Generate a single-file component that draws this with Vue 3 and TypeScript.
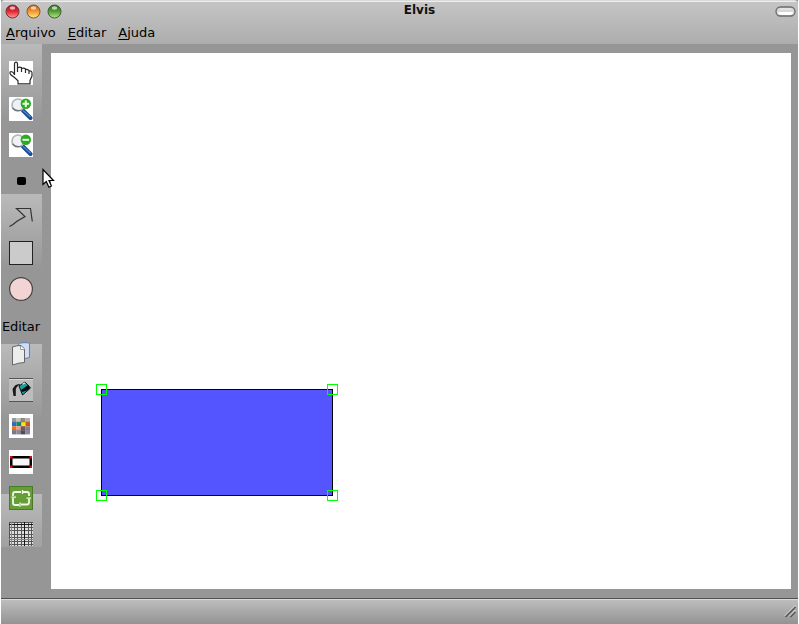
<script setup lang="ts">
interface MenuEntry {
  key: string
  rest: string
}

interface Light {
  name: string
  rim: string
  dark: string
  mid: string
  pale: string
}

const menus: MenuEntry[] = [
  { key: 'A', rest: 'rquivo' },
  { key: 'E', rest: 'ditar' },
  { key: 'A', rest: 'juda' },
]

const lights: Light[] = [
  { name: 'close', rim: '#74343a', dark: '#9c1820', mid: '#e8272f', pale: '#ffa0a0' },
  { name: 'minimize', rim: '#8c5228', dark: '#b85a18', mid: '#f3982f', pale: '#ffec85' },
  { name: 'maximize', rim: '#38602e', dark: '#2d6420', mid: '#55a036', pale: '#b8e68a' },
]

const swatches: string[][] = [
  ['#9b9a9a', '#c4c0bb', '#8f8c88', '#b1aeb0'],
  ['#1f70cf', '#128b5c', '#f6e80c', '#df4d16'],
  ['#e8781b', '#ee9d94', '#6e5a5a', '#8c7d83'],
  ['#77788c', '#8b8895', '#514b5e', '#89869e'],
]

const gridLines: number[] = [0.5, 5.5, 8.5, 12.5, 15.5, 19.5, 22.5]
</script>

<template>
  <div class="window">
    <header class="chrome">
      <div class="titlebar">
        <div class="lights">
          <svg v-for="l in lights" :key="l.name" width="15" height="15" viewBox="0 0 15 15">
            <defs>
              <linearGradient :id="l.name" x1="0" y1="0" x2="0" y2="1">
                <stop offset="0" :stop-color="l.dark" />
                <stop offset=".5" :stop-color="l.mid" />
                <stop offset="1" :stop-color="l.pale" />
              </linearGradient>
            </defs>
            <circle cx="7.500" cy="7.500" r="6.500" :fill="`url(#${l.name})`" :stroke="l.rim" />
            <ellipse class="shine" cx="7.500" cy="4" rx="2.800" ry="1.800" />
          </svg>
        </div>
        <div class="title">Elvis</div>
        <svg class="pill" width="21" height="11" viewBox="0 0 21 11">
          <rect x="1" y="1" width="19" height="9" rx="4.5" fill="#d7d7d7" stroke="#6c6c6c" stroke-width="1.3" />
          <path d="M3 6h15q-.5 3-3 3H6q-2.500 0-3-3" fill="#fff" />
          <path d="M5 3h11" stroke="#eee" />
        </svg>
      </div>
      <nav class="menubar">
        <span v-for="m in menus" :key="m.rest" class="menu"><span class="mnemonic">{{ m.key }}</span>{{ m.rest }}</span>
      </nav>
    </header>

    <main class="workspace">
      <aside class="toolbar">
        <div class="tools">
          <svg class="icon" viewBox="0 0 24 24">
            <rect width="24" height="24" fill="#fff" />
            <path d="M5.500 14V3Q5.500 1.200 7 1.200T8.500 3v8M8.500 6.800q2.500-1.300 4 0V11M12.500 7.500q2.500-1 4 .5V12M16.500 8.600q2-.5 3.500 1V13M20 10q3-.5 3 2v3l-2 4.500v3.300H9v-3L5.500 16.500 1.500 13.500Q.2 11 2 10.500q2 0 3.500 3" fill="none" stroke="#292929" stroke-width="1.200" />
          </svg>
          <svg v-for="sign in ['plus', 'minus']" :key="sign" class="icon" viewBox="0 0 24 24">
            <rect width="24" height="24" fill="#fff" />
            <path d="M14 13.500 21.500 21" stroke="#174b98" stroke-width="4" stroke-linecap="round" />
            <path d="M14 13.500 21.500 20" stroke="#4c8bcc" stroke-width="1.200" />
            <circle cx="9" cy="8" r="6" fill="#eef2f4" stroke="#b0b7bb" stroke-width="1.700" />
            <path d="M3.500 11Q7 15 12.500 13" fill="none" stroke="#6d767b" stroke-width="1.300" />
            <circle cx="16.800" cy="6.800" r="5.200" fill="#2bab22" />
            <path d="M13.500 6.800h6.600" stroke="#e8ffdc" stroke-width="2" />
            <path v-if="sign === 'plus'" d="M16.800 3.500v6.600" stroke="#e8ffdc" stroke-width="2" />
          </svg>
          <svg class="icon" viewBox="0 0 24 24">
            <rect x="8" y="8" width="9" height="8" rx="2" fill="#000" />
          </svg>
          <svg class="icon" viewBox="0 0 24 24">
            <path d="M.5 21.500 4 19.500 8 16.200 16 11.600 7.500 3.500H21.500L23.300 16.500" fill="none" stroke="#333" stroke-width="1.200" />
          </svg>
          <svg class="icon" viewBox="0 0 24 24">
            <rect x=".5" y=".5" width="23" height="23" fill="#cbcbcb" stroke="#222" />
          </svg>
          <svg class="icon" viewBox="0 0 24 24">
            <circle cx="12" cy="12" r="11.400" fill="#f2d4d4" stroke="#474343" stroke-width="1.200" />
          </svg>
        </div>
        <div class="section-label">Editar</div>
        <div class="tools">
          <svg class="icon" viewBox="0 0 24 24">
            <path d="M9.500 2.500 11.500 1Q16 .3 20.500 1v14.500L16 16.500H9.500z" fill="#cedff5" stroke="#6482ab" />
            <path d="M3.500 5Q8 3.300 12 3.500l3.500 3.300V20.500q-5 0-12 2.500z" fill="#ededeb" stroke="#666" />
            <path d="M11.500 4v3.500h4" fill="#fff" stroke="#999" />
          </svg>
          <svg class="icon" viewBox="0 0 24 24">
            <rect width="24" height="24" fill="#bdbdbd" />
            <path d="M0 .5h24M0 23.500h24" stroke="#555" />
            <path d="M0 1.500h24" stroke="#d8d8d8" />
            <path d="M3.500 11 6 7.500Q8.500 5.500 11.500 6L8 8.800 6.800 11V18H4.500z" fill="#191919" />
            <path d="m10 8 6-4 5.500 6-8 7z" fill="#18a0a4" stroke="#111" />
            <path d="m12 12 7.500-5.200 1.500 3.300-3 2.500-5 1.300z" fill="#070707" />
            <path d="m13.500 6.300 2.800-1.600" stroke="#e0e8e6" stroke-width="1.300" />
          </svg>
          <svg class="icon" viewBox="0 0 24 24">
            <rect width="24" height="24" fill="#fff" />
            <g v-for="(row, y) in swatches" :key="y">
              <rect v-for="(c, x) in row" :key="x" :x="3 + x * 4.5" :y="4 + y * 4.1" width="4.5" height="4.1" :fill="c" />
            </g>
            <path d="M3 8h18M3 16.200h18M12 4v16" stroke="#55515a" stroke-opacity=".5" stroke-width=".7" />
          </svg>
          <svg class="icon" viewBox="0 0 24 24">
            <rect width="24" height="24" fill="#fff" />
            <rect x="2.250" y="7.250" width="19.500" height="9.500" fill="#f7f7f7" stroke="#000" stroke-width="2.500" />
            <path d="M1 6h2.500v2.500H1zM20.500 6H23v2.500h-2.500zM1 15.500h2.500V18H1zM20.500 15.500H23V18h-2.500z" fill="#d60b12" />
          </svg>
          <svg class="icon" viewBox="0 0 24 24">
            <rect x=".5" y=".5" width="23" height="23" fill="#659d37" stroke="#477c24" />
            <path d="M12 6H6Q4 6 4 8v2M4 12v5q0 2 2 2h4M12 18.500h6q2 0 2-2V13M20 10V8q0-2-2-2h-4" fill="none" stroke="#f1f7e9" stroke-width="1.800" />
            <path d="M13.500 4v4M2.500 11.200H7M11 16.500v4.300M17.500 12.200H22" stroke="#f1f7e9" stroke-width="1.300" />
          </svg>
          <svg class="icon" viewBox="0 0 24 24">
            <rect width="24" height="24" fill="#dedede" />
            <path v-for="n in gridLines" :key="n" :d="`M0 ${n}h24M${n} 0v24`" stroke="#555" stroke-width="1" />
            <path d="M0 2.500h24M15.500 0v24" stroke="#161616" />
            <path d="M2.500 0v24M0 17.500h24" stroke="#888" />
          </svg>
        </div>
      </aside>

      <section class="canvas">
        <svg class="drawing" width="740" height="536" viewBox="0 0 740 536" shape-rendering="crispEdges">
          <rect x="50.500" y="336.500" width="231" height="106" fill="#5555ff" stroke="#000" />
          <g fill="none" stroke="#00ff00">
            <rect x="45.500" y="331.500" width="10" height="10" />
            <rect x="276.500" y="331.500" width="10" height="10" />
            <rect x="45.500" y="437.500" width="10" height="10" />
            <rect x="276.500" y="437.500" width="10" height="10" />
          </g>
        </svg>
      </section>
    </main>

    <footer class="statusbar">
      <svg class="grip" width="13" height="13" viewBox="0 0 13 13">
        <path d="m1.500 12 10-10M6.500 12l5-5" stroke="#555" stroke-width="1.500" />
        <path d="m.5 11 11-11M5.500 11l6-6" stroke="#ddd" stroke-width=".8" />
      </svg>
    </footer>

    <svg class="pointer" width="13" height="21" viewBox="0 0 13 21">
      <path d="M1 1.500v15l3.300-3 2.600 5.700 2.500-1.200L7 12.500h4.500z" fill="#fff" stroke="#000" stroke-width="1.200" />
    </svg>
  </div>
</template>

<style>
body {
  background: #fff;
  overflow: hidden;
}
</style>

<style scoped>
.window {
  position: relative;
  box-sizing: border-box;
  width: 797px;
  height: 624px;
  margin-left: 1px;
  display: flex;
  flex-direction: column;
  overflow: hidden;
  background: #969696;
  color: #000;
  font: 13px/16px "DejaVu Sans", sans-serif;
}

.chrome {
  box-sizing: border-box;
  height: 44px;
  border-top: 1px solid #d9d9d9;
  border-radius: 4px 4px 0 0;
  background: linear-gradient(#eee 0 1px, #c5c5c5 1px, #adadad);
}

.titlebar {
  display: grid;
  grid-template-columns: 65px 1fr 26px;
  height: 21px;
}

.lights {
  display: flex;
  gap: 6px;
  padding: 2.5px 0 0 4.4px;
}

.shine { fill: #fff; opacity: .65; }

.title {
  text-align: center;
  font-size: 12px;
  font-weight: bold;
  line-height: 18px;
  color: #111;
  padding-left: 1px;
}

.pill {
  justify-self: end;
  margin: 4.5px 2.5px 0 0;
}

.menubar {
  display: flex;
  gap: 12px;
  padding: 3px 0 0 5px;
}

.mnemonic {
  text-decoration: underline;
  text-decoration-thickness: 1px;
  text-underline-offset: 2px;
}

.workspace {
  display: flex;
  height: 554px;
}

.toolbar {
  box-sizing: border-box;
  width: 41px;
  height: 503px;
  padding-top: 17px;
  margin-right: 9px;
  background: linear-gradient(#bababa, #969696 76px, #969696) 0 0 / 41px 150px repeat-y;
}

.tools {
  display: flex;
  flex-direction: column;
  gap: 12px;
  padding-left: 8px;
}

.icon {
  display: block;
  width: 24px;
  height: 24px;
}

.section-label {
  height: 16px;
  padding-left: 1px;
  margin: 18px 0 7px;
  letter-spacing: -.1px;
  white-space: nowrap;
}

.canvas {
  width: 740px;
  height: 536px;
  margin-top: 9px;
  background: #fff;
}

.drawing { display: block; }

.statusbar {
  box-sizing: border-box;
  height: 26px;
  display: flex;
  justify-content: flex-end;
  padding: 6px 1px 0 0;
  border-top: 1px solid #505050;
  background: linear-gradient(#d8d8d8 0 1px, #bdbdbd 1px, #939393);
}

.pointer {
  position: absolute;
  left: 41px;
  top: 168px;
}
</style>
